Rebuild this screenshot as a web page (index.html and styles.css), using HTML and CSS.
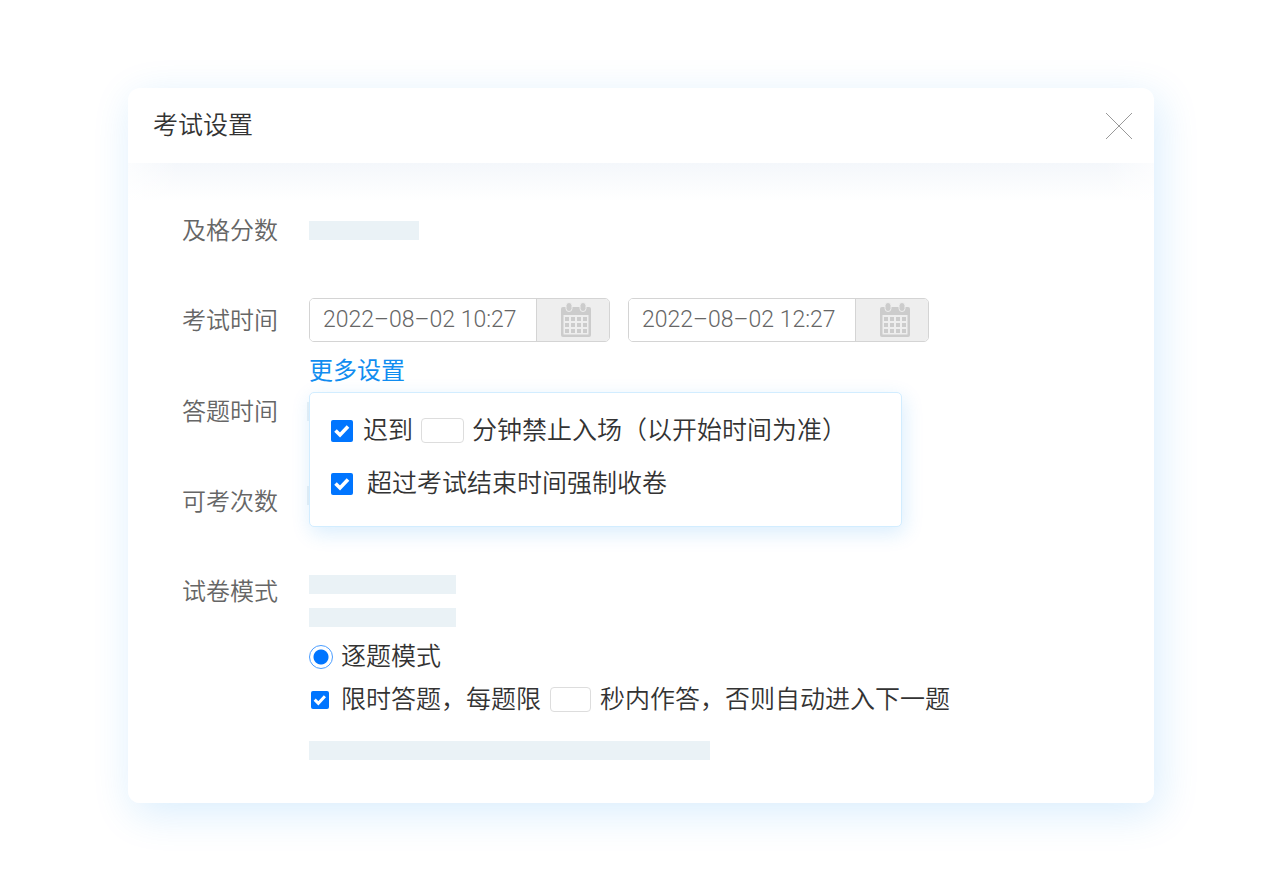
FILE: index.html
```html
<!DOCTYPE html>
<html lang="zh-CN">
<head>
  <meta charset="UTF-8">
  <meta name="viewport" content="width=device-width, initial-scale=1.0">
  <title>考试设置</title>
  <link rel="stylesheet" href="styles.css">
</head>
<body>
  <svg class="sprite" aria-hidden="true">
    <symbol id="icon-calendar" viewBox="0 0 32 36">
      <path fill-rule="evenodd" d="M3 5h26a2 2 0 0 1 2 2v26a2 2 0 0 1-2 2H3a2 2 0 0 1-2-2V7a2 2 0 0 1 2-2zM3.5 13v19.500h25V13z"/>
      <path d="M5 15h4v4H5zM11 15h4v4h-4zM17 15h4v4h-4zM23 15h4v4h-4zM5 21h4v4H5zM11 21h4v4h-4zM17 21h4v4h-4zM23 21h4v4h-4zM5 27h4v4H5zM11 27h4v4h-4zM17 27h4v4h-4zM23 27h4v4h-4z"/>
      <rect class="ring" x="6" y="0.500" width="6" height="9" rx="3"/>
      <rect class="ring" x="20" y="0.500" width="6" height="9" rx="3"/>
    </symbol>
  </svg>

  <main class="dialog">
    <header class="dialog-header">
      <h1>考试设置</h1>
      <button class="close-button" type="button" aria-label="关闭">
        <svg viewBox="0 0 28 28"><path d="M1 1l26 26M27 1L1 27"/></svg>
      </button>
    </header>

    <form class="dialog-body">
      <div class="row">
        <span class="row-label">及格分数</span>
        <div class="row-content">
          <div class="bar bar-score"></div>
        </div>
      </div>

      <div class="row row-time">
        <label class="row-label" for="start-time">考试时间</label>
        <div class="row-content">
          <div class="time-range">
            <div class="date-field">
              <input type="text" id="start-time" value="2022–08–02 10:27">
              <button type="button" aria-label="选择开始时间"><svg><use href="#icon-calendar"/></svg></button>
            </div>
            <div class="date-field">
              <input type="text" id="end-time" aria-label="结束时间" value="2022–08–02 12:27">
              <button type="button" aria-label="选择结束时间"><svg><use href="#icon-calendar"/></svg></button>
            </div>
          </div>
          <a class="more-link" href="#more">更多设置</a>
          <!-- 更多设置弹层 -->
          <div class="popover" id="more">
            <div class="option">
              <input class="check" type="checkbox" id="late" checked>
              <label for="late">迟到</label>
              <input class="number" type="text" aria-label="迟到分钟数">
              <label for="late">分钟禁止入场（以开始时间为准）</label>
            </div>
            <div class="option">
              <input class="check" type="checkbox" id="force" checked>
              <label class="force-label" for="force">超过考试结束时间强制收卷</label>
            </div>
          </div>
        </div>
      </div>

      <div class="row">
        <span class="row-label">答题时间</span>
        <div class="row-content">
          <div class="bar bar-answer"></div>
        </div>
      </div>

      <div class="row">
        <span class="row-label">可考次数</span>
        <div class="row-content">
          <div class="bar bar-times"></div>
        </div>
      </div>

      <div class="row">
        <span class="row-label">试卷模式</span>
        <div class="row-content mode">
          <div class="bar bar-mode"></div>
          <div class="bar bar-mode"></div>
          <div class="mode-line mode-radio">
            <input class="radio" type="radio" id="one-by-one" name="mode" checked>
            <label for="one-by-one">逐题模式</label>
          </div>
          <div class="mode-line">
            <input class="check check-small" type="checkbox" id="limit" checked>
            <label for="limit">限时答题，每题限</label>
            <input class="number" type="text" aria-label="每题秒数">
            <label for="limit">秒内作答，否则自动进入下一题</label>
          </div>
          <div class="bar bar-note"></div>
        </div>
      </div>
    </form>
  </main>
</body>
</html>
```
FILE: styles.css
```css
* {
  box-sizing: border-box;
}
body {
  margin: 0;
  padding: 88px 126px 87px 128px;
  background-color: #fff;
  font-family: "Noto Sans CJK SC", sans-serif;
  font-size: 25px;
  font-weight: 350;
  color: #333;
}
input,
button {
  margin: 0;
  padding: 0;
  font: inherit;
}
.sprite {
  display: none;
}

/* 对话框 */
.dialog {
  border-radius: 12px;
  background-color: #fff;
  box-shadow: 5px 10px 40px rgba(20, 140, 240, 0.16);
}
.dialog-header {
  display: flex;
  align-items: center;
  justify-content: space-between;
  height: 75px;
  padding: 0 21px 0 25px;
  border-radius: 12px 12px 0 0;
}
.dialog-header h1 {
  margin: 0;
  padding-bottom: 5px;
  font-size: 25px;
  font-weight: 350;
  line-height: 36px;
}
.close-button {
  width: 28px;
  height: 28px;
  border: none;
  background: none;
  cursor: pointer;
}
.close-button svg {
  display: block;
  width: 28px;
  height: 28px;
  fill: none;
  stroke: #999;
  stroke-width: 1;
}
.dialog-body {
  padding: 45px 20px 43px 54px;
  border-radius: 0 0 12px 12px;
  background:
    linear-gradient(to right, rgba(255, 255, 255, 0.7), transparent 50px, transparent calc(100% - 50px), rgba(255, 255, 255, 0.7)),
    linear-gradient(#f4f7fb, #fff 38px);
}

/* 表单行 */
.row {
  display: flex;
  margin-bottom: 46px;
}
.row:last-child,
.row-time {
  margin-bottom: 0;
}
.row-label {
  flex: none;
  width: 127px;
  height: 44px;
  font-size: 24px;
  line-height: 41px;
  color: #666;
}
.row-content {
  position: relative;
  flex: 1;
}
.bar {
  height: 19px;
  background-color: #eaf2f6;
}
.bar-score {
  width: 110px;
  margin-top: 13px;
}
.bar-answer,
.bar-times {
  width: 146px;
  margin-left: -2px;
}
.bar-answer {
  margin-top: 13px;
}
.bar-times {
  margin-top: 7px;
}
.bar-mode {
  width: 147px;
  margin-bottom: 14px;
}
.bar-note {
  width: 401px;
  max-width: 100%;
  margin-top: 20px;
}

/* 时间选择 */
.time-range {
  display: flex;
  gap: 18px;
}
.date-field {
  display: flex;
  width: 301px;
  height: 44px;
  border: 1px solid #d4d4d4;
  border-radius: 5px;
  overflow: hidden;
}
.date-field input {
  flex: 1;
  min-width: 0;
  padding: 0 0 2px 13px;
  border: none;
  font-family: Roboto, sans-serif;
  font-size: 23px;
  font-weight: 300;
  color: #666;
}
.date-field button {
  display: flex;
  align-items: center;
  justify-content: center;
  width: 73px;
  padding-left: 6px;
  border: none;
  border-left: 1px solid #d4d4d4;
  background-color: #eee;
  cursor: pointer;
}
.date-field svg {
  width: 32px;
  height: 36px;
  fill: #ccc;
}
.ring {
  stroke: #eee;
  stroke-width: 1;
}
.more-link {
  display: block;
  width: fit-content;
  height: 36px;
  margin-top: 11px;
  font-size: 24px;
  font-weight: 400;
  line-height: 32px;
  color: #118df0;
  text-decoration: none;
}

/* 弹层 */
.popover {
  position: absolute;
  top: 94px;
  left: 0;
  z-index: 10;
  width: 593px;
  padding: 11px 20px 16px 21px;
  border: 1px solid #d2edff;
  border-radius: 5px;
  background-color: #fff;
  box-shadow: 2px 6px 20px rgba(20, 140, 240, 0.16);
}
.option,
.mode-line {
  display: flex;
  align-items: center;
  gap: 8px;
  white-space: nowrap;
}
.option label,
.mode-line label {
  padding-bottom: 5px;
}
.option {
  height: 53px;
}
.option .check {
  margin-right: 2px;
}
.option .force-label {
  margin-left: 4px;
}
.number {
  width: 43px;
  height: 25px;
  border: 1px solid #ddd;
  border-radius: 4px;
  background-color: #fff;
}

/* 复选框与单选框 */
.check {
  flex: none;
  appearance: none;
  width: 22px;
  height: 22px;
  border-radius: 2px;
  background: #0075ff url("data:image/svg+xml,%3Csvg xmlns='http://www.w3.org/2000/svg' viewBox='0 0 22 22'%3E%3Cpath d='M4.500 10.500l4.500 4.500 8-8.500' fill='none' stroke='white' stroke-width='3.6'/%3E%3C/svg%3E") center / 100% no-repeat;
}
.check-small {
  width: 18px;
  height: 18px;
  margin: 0 4px 0 2px;
}
.radio {
  appearance: none;
  width: 24px;
  height: 24px;
  border: 1px solid #4a9dff;
  border-radius: 50%;
  background: radial-gradient(circle, #0075ff 7px, #fff 8px);
}
.mode {
  padding-top: 6px;
}
.mode-line {
  height: 43px;
}
.mode-line .number {
  width: 41px;
  margin: 0 1px;
}
.mode-radio {
  margin-top: -6px;
}
```
